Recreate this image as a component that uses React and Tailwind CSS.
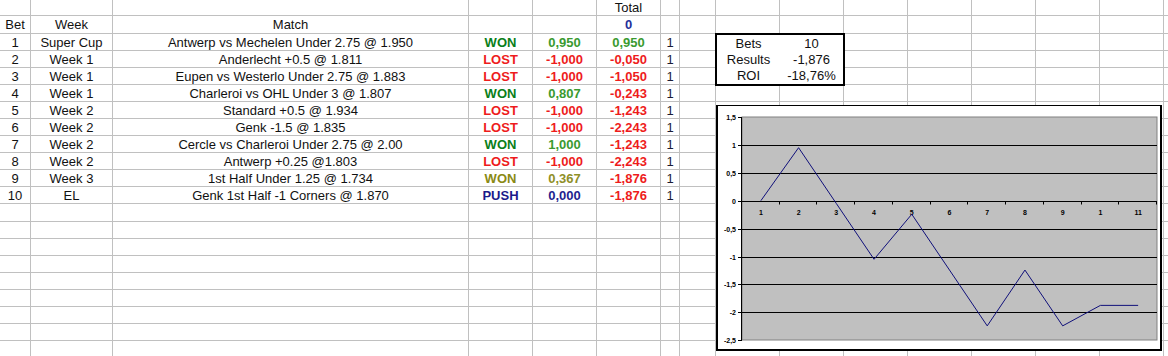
import React from "react";

const GREEN_LBL = "text-[#0a7f1a] font-bold";
const GREEN_NUM = "text-[#3a9a30] font-bold";
const RED = "text-[#ee1c1c] font-bold";
const OLIVE_LBL = "text-[#8a8a14] font-bold";
const OLIVE_NUM = "text-[#8f8f28] font-bold";
const NAVY_LBL = "text-[#1a1a8a] font-bold";
const NAVY_NUM = "text-[#1f1f8f] font-bold";

const bets = [
  ["1", "Super Cup", "Antwerp vs Mechelen Under 2.75 @ 1.950", "WON", "0,950", "0,950", "g"],
  ["2", "Week 1", "Anderlecht +0.5 @ 1.811", "LOST", "-1,000", "-0,050", "r"],
  ["3", "Week 1", "Eupen vs Westerlo Under 2.75 @ 1.883", "LOST", "-1,000", "-1,050", "r"],
  ["4", "Week 1", "Charleroi vs OHL Under 3 @ 1.807", "WON", "0,807", "-0,243", "g"],
  ["5", "Week 2", "Standard +0.5 @ 1.934", "LOST", "-1,000", "-1,243", "r"],
  ["6", "Week 2", "Genk -1.5 @ 1.835", "LOST", "-1,000", "-2,243", "r"],
  ["7", "Week 2", "Cercle vs Charleroi Under 2.75 @ 2.00", "WON", "1,000", "-1,243", "g"],
  ["8", "Week 2", "Antwerp +0.25 @1.803", "LOST", "-1,000", "-2,243", "r"],
  ["9", "Week 3", "1st Half Under 1.25 @ 1.734", "WON", "0,367", "-1,876", "o"],
  ["10", "EL", "Genk 1st Half -1 Corners @ 1.870", "PUSH", "0,000", "-1,876", "n"],
];

const NCOLS = 16;
const NROWS = 21;

function buildContent() {
  const m = {};
  m["0-5"] = { t: "Total", c: "text-[#111]" };
  m["1-0"] = { t: "Bet", c: "text-[#111]" };
  m["1-1"] = { t: "Week", c: "text-[#111]" };
  m["1-2"] = { t: "Match", c: "text-[#111]" };
  m["1-5"] = { t: "0", c: "text-[#1f2f9a] font-bold" };
  bets.forEach((b, i) => {
    const r = i + 2;
    const k = b[6];
    const lbl = k === "g" ? GREEN_LBL : k === "r" ? RED : k === "o" ? OLIVE_LBL : NAVY_LBL;
    const num = k === "g" ? GREEN_NUM : k === "r" ? RED : k === "o" ? OLIVE_NUM : NAVY_NUM;
    const tot = b[5].startsWith("-") ? RED : GREEN_NUM;
    m[`${r}-0`] = { t: b[0], c: "text-[#111]" };
    m[`${r}-1`] = { t: b[1], c: "text-[#111]" };
    m[`${r}-2`] = { t: b[2], c: "text-[#111]" };
    m[`${r}-3`] = { t: b[3], c: lbl };
    m[`${r}-4`] = { t: b[4], c: num };
    m[`${r}-5`] = { t: b[5], c: tot };
    m[`${r}-6`] = { t: "1", c: "text-[#1c1c34]" };
  });
  return m;
}

const content = buildContent();

function Chart() {
  const W = 446;
  const H = 246;
  const px0 = 26;
  const px1 = 441;
  const py0 = 12;
  const py1 = 235;
  const cw = (px1 - px0) / 11;
  const yv = (v) => py0 + (1.5 - v) * 55.8;
  const ys = (v) => Math.round(yv(v)) + 0.5;
  const data = [0, 0.95, -0.05, -1.05, -0.243, -1.243, -2.243, -1.243, -2.243, -1.876, -1.876];
  const pts = data.map((v, i) => `${(px0 + cw * (i + 0.5)).toFixed(2)},${yv(v).toFixed(2)}`).join(" ");
  const majors = [1.5, 1, 0.5, 0, -0.5, -1, -1.5, -2, -2.5];
  const labels = ["1", "2", "3", "4", "5", "6", "7", "8", "9", "1", "11"];
  const fmt = (v) => String(v).replace(".", ",");
  return (
    <svg width={W} height={H} viewBox={`0 0 ${W} ${H}`} className="block">
      <rect x="0" y="0" width={W} height={H} fill="#ffffff" />
      <rect x="0" y="0" width={W} height="1" fill="#000" />
      <rect x="0" y="0" width="2" height={H} fill="#000" />
      <rect x={W - 2} y="0" width="2" height={H} fill="#000" />
      <rect x="0" y={H - 2} width={W} height="2" fill="#000" />
      <rect x={px0} y={py0} width={px1 - px0} height={py1 - py0} fill="#c0c0c0" stroke="#808080" strokeWidth="1" />
      {[1, 0.5, -0.5, -1, -1.5, -2].map((v) => (
        <line key={v} x1={px0} x2={px1} y1={ys(v)} y2={ys(v)} stroke="#000" strokeWidth="1" />
      ))}
      <line x1={px0} x2={px1} y1={ys(0)} y2={ys(0)} stroke="#000" strokeWidth="1" />
      <line x1={px0 - 0.5} x2={px0 - 0.5} y1={py0} y2={py1} stroke="#000" strokeWidth="1" />
      {majors.map((v) => (
        <line key={"t" + v} x1={px0 - 4} x2={px0} y1={ys(v)} y2={ys(v)} stroke="#000" strokeWidth="1" />
      ))}
      {Array.from({ length: 11 }).map((_, k) => {
        const x = Math.round(px0 + cw * (k + 1)) - 0.5;
        return <line key={"xt" + k} x1={x} x2={x} y1={ys(0)} y2={ys(0) + 3} stroke="#000" strokeWidth="1" />;
      })}
      {majors.map((v) => (
        <text
          key={"l" + v}
          x="20"
          y={ys(v) + 2.5}
          textAnchor="end"
          fontSize="7"
          fontWeight="bold"
          fontFamily="'Liberation Sans', Arial, sans-serif"
          fill="#000"
        >
          {fmt(v)}
        </text>
      ))}
      {labels.map((l, i) => (
        <text
          key={"x" + i}
          x={px0 + cw * (i + 0.5)}
          y="110"
          textAnchor="middle"
          fontSize="7"
          fontWeight="bold"
          fontFamily="'Liberation Sans', Arial, sans-serif"
          fill="#000"
        >
          {l}
        </text>
      ))}
      <polyline points={pts} fill="none" stroke="#10107a" strokeWidth="1" />
    </svg>
  );
}

export default function App() {
  const cells = [];
  for (let r = 0; r < NROWS; r++) {
    for (let c = 0; c < NCOLS; c++) {
      if (r >= 2 && r <= 4 && (c === 8 || c === 9)) continue;
      const k = `${r}-${c}`;
      const v = content[k];
      cells.push(
        <div
          key={k}
          className={`flex items-center justify-center overflow-visible whitespace-nowrap border-[#c0c0c0] ${
            c < NCOLS - 1 ? "border-r" : ""
          } border-b leading-[15px]`}
        >
          {v ? <span className={v.c}>{v.t}</span> : null}
        </div>
      );
    }
  }

  return (
    <div className="relative h-[356px] w-[1168px] overflow-hidden bg-white font-['Liberation_Sans',Arial,sans-serif] text-[13px] text-[#111]">
      <div className="grid grid-cols-[31px_82px_356px_64px_64px_64px_19px_36px_64px_64px_64px_64px_64px_64px_64px_1fr] grid-rows-[16px_18px_repeat(19,17.06px)]">
        <div className="relative z-10 col-span-2 col-start-9 row-span-3 row-start-3 -m-px grid grid-cols-2 grid-rows-3 border-2 border-black bg-white leading-[15px]">
          <div className="flex items-center justify-center">Bets</div>
          <div className="flex items-center justify-center">10</div>
          <div className="flex items-center justify-center">Results</div>
          <div className="flex items-center justify-center">-1,876</div>
          <div className="flex items-center justify-center">ROI</div>
          <div className="flex items-center justify-center">-18,76%</div>
        </div>
        {cells}
      </div>
      <div className="absolute left-[716px] top-[105px] z-20">
        <Chart />
      </div>
    </div>
  );
}
